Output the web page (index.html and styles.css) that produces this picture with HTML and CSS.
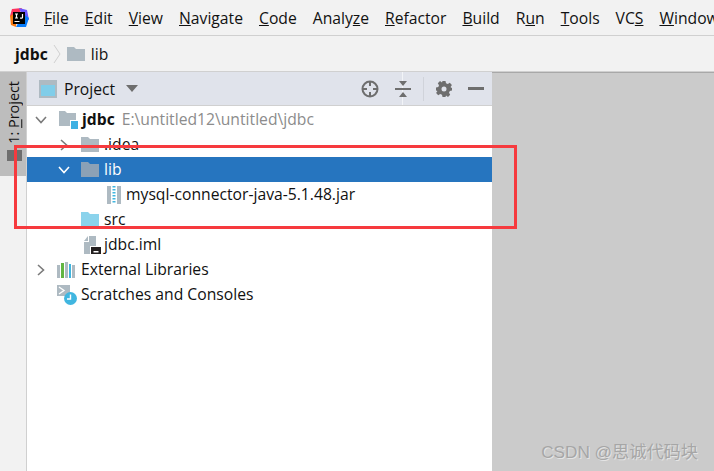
FILE: index.html
```html
<!DOCTYPE html>
<html lang="zh">
<head>
    <meta charset="UTF-8">
    <title>jdbc</title>
    <link rel="stylesheet" href="styles.css">
</head>
<body>
    <div class="menubar">
        <svg class="logo" width="20" height="20" viewBox="0 0 20 20">
            <path d="M3 1 L13 0 L8 10 L1 8 Z" fill="#fe315d"/>
            <path d="M1 8 L8 4 L7 19 L2 17 Z" fill="#f97a12"/>
            <path d="M10 0 L18 2 L20 12 L14 10 Z" fill="#6b57ff"/>
            <path d="M14 6 L20 10 L17 19 L7 19 Z" fill="#087cfa"/>
            <rect x="4" y="4" width="12" height="12" fill="#000"/>
            <path d="M6 6 H9 M7.5 6 V10 M6 10 H9 M13.5 6 V9.5 Q13.5 10.5 11 10" stroke="#fff" stroke-width="1.2" fill="none"/>
            <rect x="5.5" y="13" width="5" height="1" fill="#fff"/>
        </svg>
        <span class="menu-item"><u>F</u>ile</span>
        <span class="menu-item"><u>E</u>dit</span>
        <span class="menu-item"><u>V</u>iew</span>
        <span class="menu-item"><u>N</u>avigate</span>
        <span class="menu-item"><u>C</u>ode</span>
        <span class="menu-item">Analy<u>z</u>e</span>
        <span class="menu-item"><u>R</u>efactor</span>
        <span class="menu-item"><u>B</u>uild</span>
        <span class="menu-item">R<u>u</u>n</span>
        <span class="menu-item"><u>T</u>ools</span>
        <span class="menu-item">VC<u>S</u></span>
        <span class="menu-item"><u>W</u>indow</span>
    </div>
    <div class="crumbs">
        <b>jdbc</b>
        <svg class="crumb-sep" width="8" height="20" viewBox="0 0 8 20"><path d="M1 1 L7 10 L1 19" fill="none" stroke="#d0d0d0"/></svg>
        <svg class="icon" width="18" height="16" viewBox="0 0 18 16"><path d="M0 1 H7 L9 3 H18 V15 H0 Z" fill="#aebac2"/></svg>
        <span class="crumb-name">lib</span>
    </div>
    <div class="workspace">
        <div class="strip">
            <div class="strip-tab">
                <span class="strip-label">1: <u>P</u>roject</span>
                <span class="strip-icon"></span>
            </div>
        </div>
        <div class="panel">
            <div class="panel-head">
                <svg class="icon" width="18" height="18" viewBox="0 0 18 18"><rect width="18" height="18" fill="#aebac2"/><rect x="2" y="5" width="14" height="11" fill="#80cde9"/></svg>
                <span class="panel-title">Project</span>
                <svg class="caret" width="12" height="7" viewBox="0 0 12 7"><path d="M0 0 H12 L6 7 Z" fill="#6e6e6e"/></svg>
                <div class="panel-tools">
                    <svg width="18" height="18" viewBox="0 0 18 18" fill="none" stroke="#6e6e6e" stroke-width="2"><circle cx="9" cy="9" r="7.5"/><path d="M9 1 V6 M9 12 V17 M1 9 H6 M12 9 H17"/></svg>
                    <svg class="tool-collapse" width="16" height="18" viewBox="0 0 16 18"><path d="M4 1 H12 L8 6 Z M4 17 H12 L8 12 Z" fill="#6e6e6e"/><rect y="8" width="16" height="2" fill="#6e6e6e"/></svg>
                    <span class="tool-sep"></span>
                    <svg width="16" height="16" viewBox="0 0 16 16"><path fill-rule="evenodd" d="M6.5 0 H9.5 L10 2.3 L11.8 3 L13.8 1.8 L15.9 4 L14.6 5.9 L15.3 7 L16 6.6 V9.5 L13.8 10 L13 11.8 L14.2 13.8 L12 15.9 L10 14.6 L9.5 16 H6.5 L6 13.7 L4.2 13 L2.2 14.2 L0.1 12 L1.4 10 L0 9.5 V6.5 L2.3 6 L3 4.2 L1.8 2.2 L4 0.1 L6 1.4 Z M8 5.5 A2.5 2.5 0 1 0 8 10.5 A2.5 2.5 0 1 0 8 5.5 Z" fill="#6e6e6e"/></svg>
                    <span class="tool-minus"></span>
                </div>
            </div>
            <div class="tree">
                <div class="row">
                    <svg class="arrow" width="12" height="8" viewBox="0 0 12 8"><path d="M1 1 L6 6.5 L11 1" fill="none" stroke="#7a7a7a" stroke-width="1.6"/></svg>
                    <svg class="module-icon" width="19" height="18" viewBox="0 0 19 18"><path d="M0 0 H6 L8 2 H17 V15 H0 Z" fill="#aebac2"/><rect x="11" y="9" width="8" height="9" fill="#fff"/><rect x="12" y="10" width="7" height="8" fill="#3fb1e3"/></svg>
                    <b class="name">jdbc</b><span class="path">E:\untitled12\untitled\jdbc</span>
                </div>
                <div class="row depth1">
                    <svg class="arrow" width="8" height="12" viewBox="0 0 8 12"><path d="M1 1 L6.5 6 L1 11" fill="none" stroke="#7a7a7a" stroke-width="1.6"/></svg>
                    <svg class="folder" width="18" height="15" viewBox="0 0 18 15"><path d="M0 0 H7 L9 2 H18 V15 H0 Z" fill="#aebac2"/></svg>
                    <span>.idea</span>
                </div>
                <div class="row depth1 selected">
                    <svg class="arrow" width="12" height="8" viewBox="0 0 12 8"><path d="M1 1 L6 6.5 L11 1" fill="none" stroke="#fff" stroke-width="1.6"/></svg>
                    <svg class="folder" width="18" height="15" viewBox="0 0 18 15"><path d="M0 0 H7 L9 2 H18 V15 H0 Z" fill="#8ba1b6"/></svg>
                    <span>lib</span>
                </div>
                <div class="row depth2">
                    <svg class="jar" width="14" height="18" viewBox="0 0 14 18"><rect width="14" height="18" fill="#aebac2"/><rect x="4" y="0" width="6" height="18" fill="#fff"/><path d="M7 0 V18" stroke="#40b6e0" stroke-width="3" stroke-dasharray="1.5 1.5"/></svg>
                    <span>mysql-connector-java-5.1.48.jar</span>
                </div>
                <div class="row depth1">
                    <span class="arrow-gap"></span>
                    <svg class="folder" width="18" height="15" viewBox="0 0 18 15"><path d="M0 0 H7 L9 2 H18 V15 H0 Z" fill="#8bd3ec"/></svg>
                    <span>src</span>
                </div>
                <div class="row depth1 file-row">
                    <svg class="iml" width="18" height="18" viewBox="0 0 18 18"><path d="M1 6 L6 6 L6 0 H13 V10 H7 V18 H1 Z" fill="#aebac2"/><path d="M1 5 L5 0 V5 Z" fill="#aebac2"/><rect x="8" y="11" width="10" height="7" fill="#231f20"/><rect x="10.5" y="15" width="5" height="1.5" fill="#fff"/></svg>
                    <span>jdbc.iml</span>
                </div>
                <div class="row">
                    <svg class="arrow" width="8" height="12" viewBox="0 0 8 12"><path d="M1 1 L6.5 6 L1 11" fill="none" stroke="#7a7a7a" stroke-width="1.6"/></svg>
                    <svg class="root-icon" width="18" height="16" viewBox="0 0 18 16"><rect x="0" y="3" width="3" height="13" fill="#aebac2"/><rect x="4" y="1" width="3" height="15" fill="#62b543"/><rect x="8" y="0" width="3" height="16" fill="#aebac2"/><rect x="12" y="2" width="2" height="14" fill="#40b6e0"/><rect x="15" y="3" width="3" height="13" fill="#aebac2"/></svg>
                    <span>External Libraries</span>
                </div>
                <div class="row scratch-row">
                    <svg class="root-icon" width="20" height="20" viewBox="0 0 20 20"><rect y="0" width="13" height="11" fill="#aebac2"/><path d="M2 2 L7 5.5 L2 9" fill="none" stroke="#fff" stroke-width="1.4"/><circle cx="13.5" cy="13.5" r="6.5" fill="#40b6e0"/><path d="M13.5 9.5 V14 H10" fill="none" stroke="#fff" stroke-width="1.4"/></svg>
                    <span>Scratches and Consoles</span>
                </div>
            </div>
        </div>
        <div class="gray-area"></div>
    </div>
    <div class="red-box"></div>
    <div class="watermark">CSDN @思诚代码块</div>
</body>
</html>
```

FILE: styles.css
```css
html, body {
    margin: 0;
    padding: 0;
}
body {
    width: 714px;
    height: 471px;
    overflow: hidden;
    position: relative;
    display: flex;
    flex-direction: column;
    background: #f2f2f2;
    font-family: "Open Sans", "Noto Sans", sans-serif;
    font-size: 15.7px;
    color: #111;
}
svg {
    display: block;
    flex-shrink: 0;
}
.menubar {
    height: 35px;
    flex-shrink: 0;
    display: flex;
    align-items: center;
    padding-left: 9px;
    gap: 16px;
    border-bottom: 1px solid #d0d0d0;
    white-space: nowrap;
    overflow: hidden;
}
.logo {
    margin-right: -1px;
}
.crumbs {
    height: 35px;
    flex-shrink: 0;
    display: flex;
    align-items: center;
    padding-left: 15px;
    gap: 4px;
    border-bottom: 1px solid #d0d0d0;
}
.crumb-sep {
    margin: 0 2px 0 1px;
}
.crumb-name {
    margin-left: 2px;
}
.workspace {
    flex: 1;
    display: flex;
    min-height: 0;
}
.strip {
    width: 26px;
    flex-shrink: 0;
    border-right: 1px solid #d0d0d0;
}
.strip-tab {
    height: 104px;
    background: #bdbdbd;
    position: relative;
}
.strip-label {
    position: absolute;
    left: 4px;
    top: 9px;
    writing-mode: vertical-rl;
    transform: rotate(180deg);
    font-size: 14.4px;
    line-height: 20px;
}
.strip-icon {
    position: absolute;
    left: 7px;
    top: 78px;
    width: 15px;
    height: 11px;
    background: #6e6e6e;
}
.panel {
    width: 465px;
    flex-shrink: 0;
    display: flex;
    flex-direction: column;
    background: #fff;
}
.panel-head {
    height: 33px;
    flex-shrink: 0;
    display: flex;
    align-items: center;
    padding: 0 8px 0 12px;
    background: #e0e3eb;
    border-bottom: 1px solid #d0d0d0;
    position: relative;
}
.panel-head::after {
    content: "";
    position: absolute;
    left: 375px;
    top: 0;
    bottom: 0;
    width: 1px;
    background: #f2f4f7;
}
.tool-collapse {
    position: relative;
    z-index: 1;
}
.panel-title {
    margin-left: 7px;
}
.caret {
    margin-left: 11px;
}
.panel-tools {
    margin-left: auto;
    display: flex;
    align-items: center;
    gap: 16px;
}
.tool-sep {
    width: 1px;
    height: 24px;
    background: #d0d3da;
    margin: 0 -4px;
}
.tool-minus {
    width: 16px;
    height: 3px;
    background: #6e6e6e;
}
.tree {
    flex: 1;
    padding-top: 1px;
}
.row {
    height: 25px;
    display: flex;
    align-items: center;
    padding-left: 8px;
    white-space: nowrap;
}
.row > span, .row > b {
    position: relative;
    top: -1px;
}
.arrow {
    width: 12px;
}
.module-icon {
    margin: 1px 4px 0 12px;
}
.path {
    color: #8c8c8c;
    margin-left: 7px;
}
.depth1 {
    padding-left: 31px;
}
.depth1 .folder {
    margin: 0 5px 0 11px;
}
.arrow-gap {
    width: 12px;
}
.selected {
    background: #2675bf;
    color: #fff;
}
.depth2 {
    padding-left: 80px;
}
.jar {
    margin-right: 5px;
}
.file-row {
    padding-left: 56px;
}
.iml {
    margin-right: 3px;
}
.root-icon {
    margin: 0 6px 0 10px;
}
.scratch-row {
    padding-left: 20px;
}
.scratch-row .root-icon {
    margin: 0 4px 0 10px;
}
.gray-area {
    flex: 1;
    background: #cbcbcb;
    border-top: 1px solid #a8a8a8;
}
.red-box {
    position: absolute;
    left: 14px;
    top: 145px;
    width: 497px;
    height: 78px;
    border: 3px solid #f63a3e;
}
.watermark {
    position: absolute;
    right: 16px;
    top: 438px;
    font-family: "Liberation Sans", "Noto Sans CJK SC", sans-serif;
    font-size: 17.2px;
    color: #a6a6a6;
    text-shadow: 1px 1px 0 #e4e4e4;
}
```
